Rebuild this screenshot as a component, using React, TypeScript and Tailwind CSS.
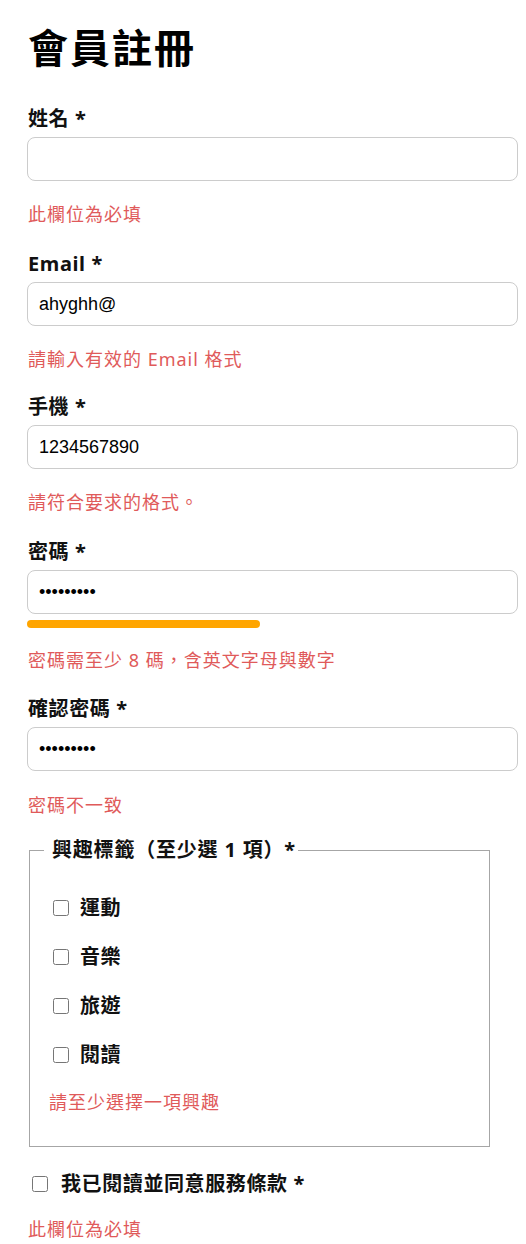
import React from "react";

const ERR = "text-[#e05a5a]";
const FONT = { fontFamily: '"Noto Sans", "Noto Sans CJK TC", sans-serif' };

function Label({ children }: { children: React.ReactNode }) {
  return <label className="block text-[20px] leading-[28px] font-bold tracking-[0.6px] text-[#111] mb-1">{children}</label>;
}

function TextInput({ value = "", type = "text" }: { value?: string; type?: string }) {
  return (
    <input
      type={type}
      readOnly
      value={value}
      className="block -ml-px w-[491px] h-[44px] px-[11px] rounded-lg border border-[#cccccc] bg-white text-[18px] text-black outline-none"
      style={{ fontFamily: '"Liberation Sans", Arial, sans-serif' }}
    />
  );
}

function ErrorText({ children, className = "" }: { children: React.ReactNode; className?: string }) {
  return <p className={`text-[18px] leading-[26px] tracking-[1px] ${ERR} ${className}`}>{children}</p>;
}

function Field({ label, value, type, error, gap }: { label: string; value?: string; type?: string; error: string; gap: string }) {
  return (
    <div className={gap}>
      <Label>{label}</Label>
      <TextInput value={value} type={type} />
      <ErrorText className="mt-5">{error}</ErrorText>
    </div>
  );
}

const interests = ["運動", "音樂", "旅遊", "閱讀"];

export default function App() {
  return (
    <div className="min-h-screen bg-white px-[28px] pt-[24px] pb-6" style={FONT}>
      <h1 className="text-[40px] leading-[48px] font-bold text-black mb-[33px] tracking-[2px]">會員註冊</h1>

      <Field label="姓名 *" error="此欄位為必填" gap="mb-[23px]" />
      <Field label="Email *" value="ahyghh@" error="請輸入有效的 Email 格式" gap="mb-[21px]" />
      <Field label="手機 *" value="1234567890" error="請符合要求的格式。" gap="mb-[23px]" />

      <div className="mb-[22px]">
        <Label>密碼 *</Label>
        <TextInput type="password" value="123456789" />
        <div className="mt-[6px] h-2 w-[233px] -ml-px rounded-full bg-[#ffa500]" />
        <ErrorText className="mt-[19px]">密碼需至少 8 碼，含英文字母與數字</ErrorText>
      </div>

      <div className="mb-[18px]">
        <Label>確認密碼 *</Label>
        <TextInput type="password" value="123456789" />
        <ErrorText className="mt-[21px]">密碼不一致</ErrorText>
      </div>

      <fieldset className="ml-px w-[461px] border border-[#a6a6a6] pl-[14px] pb-[31px]">
        <legend className="pl-2 pr-[2px] text-[20px] leading-[28px] font-bold tracking-[0.8px] text-[#111]">興趣標籤（至少選 1 項）*</legend>
        <div className="pl-[9px] pt-[30px] flex flex-col gap-[21px]">
          {interests.map((t) => (
            <label key={t} className="flex items-center gap-[11px] h-[28px] text-[20px] font-bold tracking-[0.6px] text-[#111]">
              <input type="checkbox" className="w-4 h-4 m-0" />
              {t}
            </label>
          ))}
        </div>
        <ErrorText className="pl-[5px] mt-5">請至少選擇一項興趣</ErrorText>
      </fieldset>

      <label className="mt-[23px] ml-1 flex items-center gap-[13px] h-[28px] text-[20px] font-bold tracking-[0.6px] text-[#111]">
        <input type="checkbox" className="w-4 h-4 m-0" />
        我已閱讀並同意服務條款 *
      </label>
      <ErrorText className="mt-[18px]">此欄位為必填</ErrorText>
    </div>
  );
}
